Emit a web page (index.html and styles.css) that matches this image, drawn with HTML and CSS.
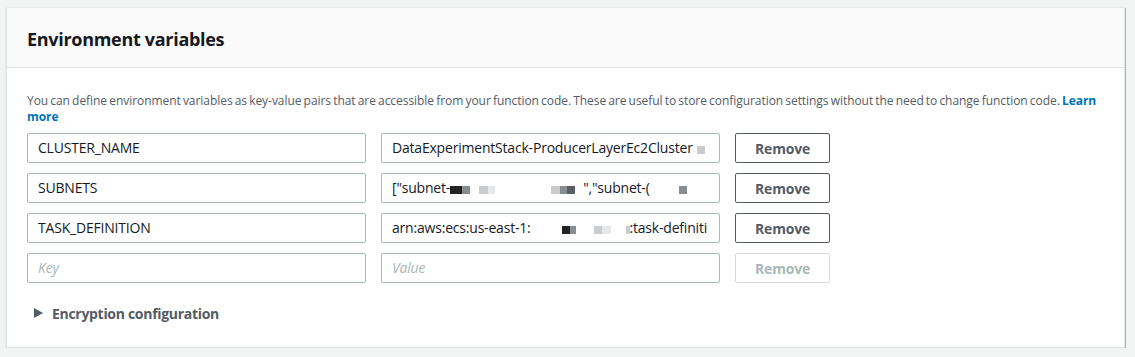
FILE: index.html
```html
<!DOCTYPE html>
<html>
<head>
<meta charset="utf-8">
<link rel="stylesheet" href="styles.css">
</head>
<body>
<div class="card">
  <div class="card-header">
    <h2 class="title">Environment variables</h2>
  </div>
  <div class="card-body">
    <p class="desc">You can define environment variables as key-value pairs that are accessible from your function code. These are useful to store configuration settings without the need to change function code. <a class="link" href="#">Learn</a> <a class="link" href="#">more</a></p>
    <div class="rows">
      <div class="row">
        <div class="field">CLUSTER_NAME</div>
        <div class="field">DataExperimentStack-ProducerLayerEc2Cluster<span class="blk gap4 c-l" style="width:8px"></span></div>
        <button class="btn">Remove</button>
      </div>
      <div class="row">
        <div class="field">SUBNETS</div>
        <div class="field">["subnet-<span class="blk c-d" style="width:12px"></span><span class="blk c-m" style="width:8px"></span><span class="blk c-l gap9" style="width:9px"></span><span class="blk c-xl" style="width:7px"></span><span class="blk c-l gap56" style="width:9px"></span><span class="blk c-m" style="width:7px"></span><span class="blk c-g" style="width:8px"></span><span class="gap8">","subnet-(</span><span class="blk c-m gap29" style="width:8px"></span></div>
        <button class="btn">Remove</button>
      </div>
      <div class="row">
        <div class="field">TASK_DEFINITION</div>
        <div class="field">arn:aws:ecs:us-east-1:<span class="blk c-d gap31" style="width:8px"></span><span class="blk c-m" style="width:6px"></span><span class="blk c-l gap18" style="width:8px"></span><span class="blk c-xl" style="width:9px"></span><span class="blk c-l gap15" style="width:4px"></span>:task-definiti</div>
        <button class="btn">Remove</button>
      </div>
      <div class="row">
        <div class="field placeholder">Key</div>
        <div class="field placeholder">Value</div>
        <button class="btn disabled">Remove</button>
      </div>
    </div>
    <div class="expander">
      <span class="caret"></span>
      <span class="exp-label">Encryption configuration</span>
    </div>
  </div>
</div>
</body>
</html>
```

FILE: styles.css
```css
html, body {
  margin: 0;
  padding: 0;
}
body {
  background: #f2f3f3;
  font-family: "Open Sans", "Noto Sans", Arial, sans-serif;
  color: #16191f;
  padding: 7px 10px 0 6px;
}
.card {
  background: #fff;
  border: 1px solid #e1e4e4;
  border-top-color: #eaeded;
  box-shadow: 1px 1px 0 0 #aab7b8, 0 1px 1px 0 rgba(0, 28, 36, 0.25);
}
.card-header {
  background: #fafafa;
  border-bottom: 1px solid #e1e4e4;
  height: 59px;
  display: flex;
  align-items: center;
  padding: 0 20px;
}
.title {
  margin: 2px 0 0 0;
  font-size: 18px;
  font-weight: 700;
  line-height: 22px;
  color: #16191f;
  letter-spacing: -0.3px;
}
.card-body {
  padding: 25px 20px 24px 20px;
}
.desc {
  margin: 0;
  font-size: 12px;
  line-height: 16px;
  color: #545b64;
  word-spacing: -0.9px;
  letter-spacing: -0.05px;
}
.link {
  color: #0073bb;
  font-weight: 700;
  text-decoration: none;
}
.rows {
  margin-top: 8px;
  display: flex;
  flex-direction: column;
  gap: 10px;
}
.row {
  display: flex;
  gap: 15px;
}
.field {
  box-sizing: border-box;
  width: 339px;
  height: 30px;
  border: 1px solid #aab7b8;
  border-radius: 2px;
  padding: 0 10px;
  font-size: 14px;
  line-height: 28px;
  color: #16191f;
  white-space: nowrap;
  overflow: hidden;
  letter-spacing: -0.2px;
}
.placeholder {
  color: #aab7b8;
  font-style: italic;
}
.blk {
  display: inline-block;
  height: 8px;
  vertical-align: -1px;
}
.c-d { background: #232323; }
.c-g { background: #5c5f62; }
.c-m { background: #8a8d90; }
.c-l { background: #c9cbcc; }
.c-xl { background: #e6e7e8; }
.gap4 { margin-left: 4px; }
.gap8 { margin-left: 8px; }
.gap9 { margin-left: 9px; }
.gap15 { margin-left: 15px; }
.gap18 { margin-left: 18px; }
.gap29 { margin-left: 29px; }
.gap31 { margin-left: 31px; }
.gap56 { margin-left: 56px; }
.btn {
  box-sizing: border-box;
  width: 95px;
  height: 30px;
  background: #fff;
  border: 1px solid #545b64;
  border-radius: 2px;
  font-family: inherit;
  font-size: 14px;
  font-weight: 700;
  color: #545b64;
  padding: 0;
  letter-spacing: -0.2px;
}
.btn.disabled {
  border-color: #d5dbdb;
  color: #aab7b8;
}
.expander {
  margin-top: 20px;
  display: flex;
  align-items: center;
  height: 20px;
  padding-left: 7px;
}
.caret {
  width: 0;
  height: 0;
  border-top: 5px solid transparent;
  border-bottom: 5px solid transparent;
  border-left: 9px solid #545b64;
  margin-right: 9px;
}
.exp-label {
  font-size: 14px;
  font-weight: 700;
  color: #545b64;
  letter-spacing: -0.3px;
}
```
